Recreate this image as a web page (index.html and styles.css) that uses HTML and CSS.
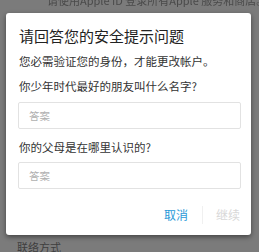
FILE: index.html
```html
<!DOCTYPE html>
<html lang="zh-CN">
<head>
<meta charset="utf-8">
<link rel="stylesheet" href="styles.css">
</head>
<body>
<div class="page">
  <div class="bg-top">请使用Apple ID 登录所有Apple 服务和商店。</div>
  <div class="dialog">
    <div class="title">请回答您的安全提示问题</div>
    <div class="subtitle">您必需验证您的身份，才能更改帐户。</div>
    <div class="question q1">你少年时代最好的朋友叫什么名字?</div>
    <div class="answer a1">答案</div>
    <div class="question q2">你的父母是在哪里认识的?</div>
    <div class="answer a2">答案</div>
    <div class="actions">
      <span class="btn cancel">取消</span>
      <span class="sep"></span>
      <span class="btn next">继续</span>
    </div>
  </div>
  <div class="bg-bottom">联络方式</div>
</div>
</body>
</html>
```
FILE: styles.css
```css
html, body {
  margin: 0;
  padding: 0;
  background: #7b7b7b;
  width: 259px;
  height: 252px;
  overflow: hidden;
  font-family: "Noto Sans CJK SC", "Noto Sans", sans-serif;
}
.page {
  display: flex;
  flex-direction: column;
}
.bg-top {
  height: 13px;
  margin-top: -6px;
  padding-left: 47px;
  font-size: 11px;
  line-height: 13px;
  color: #4a4a4a;
  white-space: nowrap;
  overflow: hidden;
  filter: blur(0.4px);
}
.dialog {
  margin-top: 6px;
  margin-left: 6px;
  width: 245px;
  box-sizing: border-box;
  background: #fff;
  border-radius: 3px;
  box-shadow: 0 2px 5px rgba(0,0,0,0.45);
  padding: 13px 10px 10px 12px;
  display: flex;
  flex-direction: column;
}
.title {
  padding-left: 1px;
  font-size: 15px;
  line-height: 20px;
  color: #222;
  white-space: nowrap;
}
.subtitle, .question {
  padding-left: 1px;
  font-size: 11.5px;
  line-height: 16px;
  color: #333;
  white-space: nowrap;
}
.subtitle { margin-top: 7px; }
.q1 { margin-top: 9px; }
.q2 { margin-top: 10px; }
.answer {
  height: 27px;
  box-sizing: border-box;
  border: 1px solid #e2e2e2;
  border-radius: 2px;
  padding-left: 10px;
  font-size: 10.5px;
  line-height: 25px;
  color: #b0b0b0;
}
.a1 { margin-top: 8px; }
.a2 { margin-top: 7px; }
.actions {
  margin-top: 16px;
  height: 20px;
  display: flex;
  justify-content: flex-end;
  align-items: center;
  padding-right: 1px;
}
.btn {
  font-size: 12px;
  line-height: 20px;
}
.cancel { color: #2a9ad8; }
.next { color: #d8d8d8; }
.sep {
  width: 1px;
  height: 18px;
  background: #f0f0f0;
  margin: 0 13px 0 14px;
}
.bg-bottom {
  margin-top: 4px;
  padding-left: 17px;
  font-size: 11px;
  line-height: 16px;
  color: #3e3e3e;
}
```
